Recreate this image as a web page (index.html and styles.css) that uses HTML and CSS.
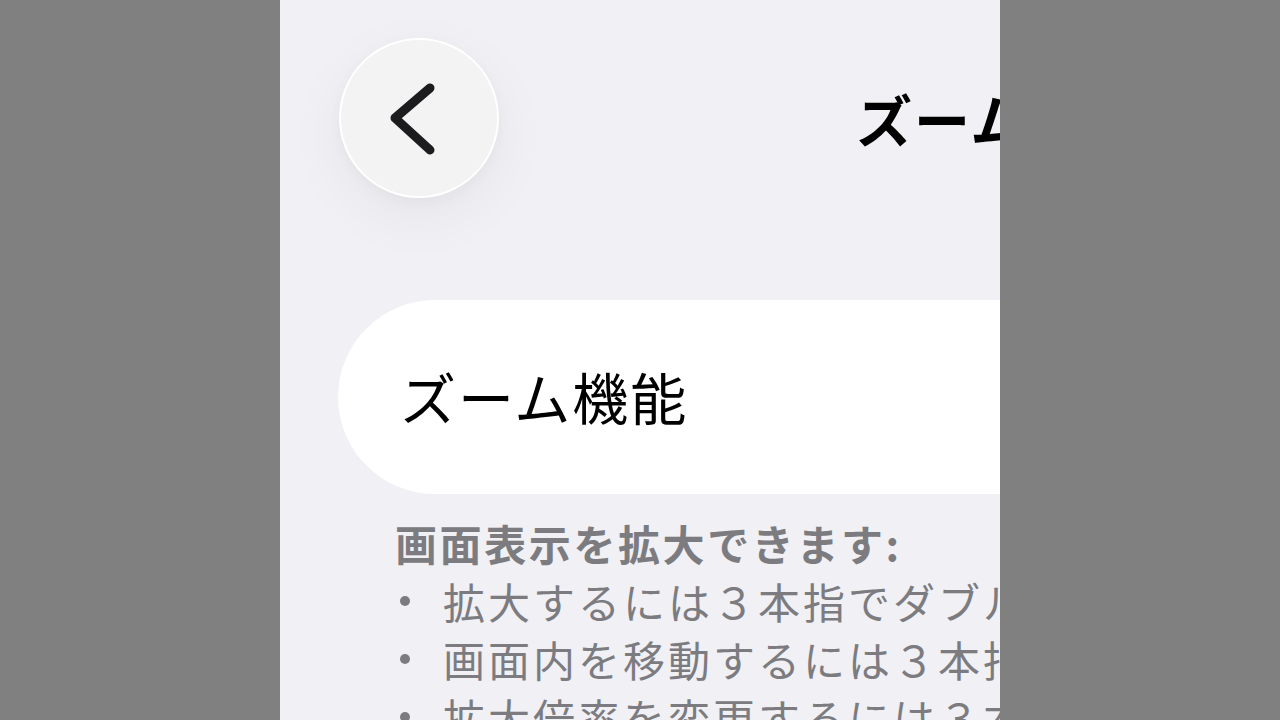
FILE: index.html
```html
<!DOCTYPE html>
<html lang="ja">
<head>
<meta charset="utf-8">
<title>ズーム</title>
<link rel="stylesheet" href="styles.css">
</head>
<body>
<div class="screen">
  <header class="nav">
    <button class="back" aria-label="戻る">
      <svg width="160" height="160" viewBox="0 0 160 160">
        <path d="M91 50 L56 80 L91 112" fill="none" stroke="#1c1c1e" stroke-width="9" stroke-linecap="round" stroke-linejoin="round"/>
      </svg>
    </button>
    <h1 class="title">ズーム</h1>
  </header>
  <section class="card">
    <span class="card-label">ズーム機能</span>
  </section>
  <section class="desc">
    <p class="desc-head">画面表示を拡大できます:</p>
    <ul class="desc-list">
      <li><span class="dot"></span><span class="item">拡大するには３本指でダブルタップします</span></li>
      <li><span class="dot"></span><span class="item">画面内を移動するには３本指でドラッグします</span></li>
      <li><span class="dot"></span><span class="item">拡大倍率を変更するには３本指でダブルタップしてドラッグします</span></li>
    </ul>
  </section>
</div>
</body>
</html>
```

FILE: styles.css
```css
html, body {
  margin: 0;
  padding: 0;
}
body {
  background: #808080;
  width: 1280px;
  height: 720px;
  overflow: hidden;
  font-family: "Noto Sans CJK JP", "Noto Sans", sans-serif;
}
.screen {
  margin-left: 280px;
  width: 720px;
  height: 720px;
  background: #f0f0f5;
  overflow: hidden;
}
.nav {
  display: flex;
  align-items: center;
  padding-top: 38px;
  padding-left: 59px;
  height: 160px;
}
.back {
  width: 160px;
  height: 160px;
  flex: none;
  padding: 0;
  border-radius: 50%;
  border: 2px solid #ffffff;
  background: #f3f3f4;
  box-shadow: 0 18px 60px rgba(0, 0, 0, 0.05), 0 4px 14px rgba(0, 0, 0, 0.03);
  display: flex;
  align-items: center;
  justify-content: center;
  box-sizing: border-box;
}
.back svg {
  display: block;
  flex: none;
}
.title {
  margin: 0 0 0 357px;
  font-size: 56px;
  font-weight: 700;
  line-height: 1;
  color: #000;
  white-space: nowrap;
  letter-spacing: 2px;
}
.card {
  margin-top: 102px;
  margin-left: 58px;
  width: 900px;
  height: 194px;
  border-radius: 97px;
  background: #ffffff;
  display: flex;
  align-items: center;
  padding-left: 62px;
  box-sizing: border-box;
}
.card-label {
  font-size: 56px;
  line-height: 1;
  color: #000;
  white-space: nowrap;
  letter-spacing: 2px;
  position: relative;
  top: -1px;
}
.desc {
  padding-left: 115px;
  margin-top: 20px;
  color: #7c7c80;
}
.desc-head {
  margin: 0;
  font-size: 42px;
  font-weight: 700;
  line-height: 58px;
  letter-spacing: 2.6px;
  white-space: nowrap;
}
.desc-list {
  margin: 0;
  padding: 0;
  list-style: none;
}
.desc-list li {
  display: flex;
  align-items: center;
  height: 58px;
  white-space: nowrap;
}
.dot {
  width: 10px;
  height: 10px;
  border-radius: 50%;
  background: #7c7c80;
  margin-left: 5px;
  margin-right: 33px;
  flex: none;
}
.item {
  font-size: 42px;
  line-height: 58px;
  letter-spacing: 3px;
  font-weight: 400;
}
```
